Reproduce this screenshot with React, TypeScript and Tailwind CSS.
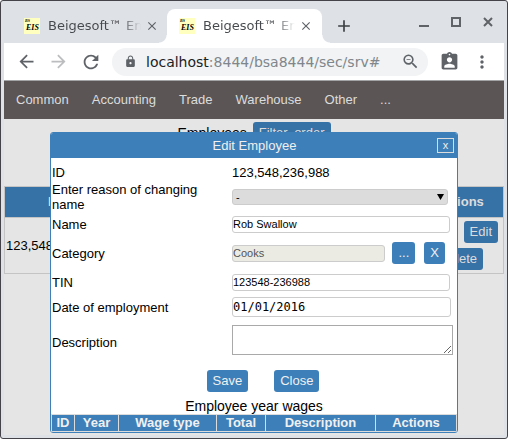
import type { ReactNode } from "react";
import {
  MdAdd,
  MdArrowBack,
  MdArrowForward,
  MdAssignmentInd,
  MdClose,
  MdLock,
  MdMoreVert,
  MdRefresh,
  MdZoomOut,
} from "react-icons/md";

const flare = "size-2 shrink-0 self-end";

function Favicon() {
  return (
    <svg className="size-4 shrink-0" viewBox="0 0 16 16" aria-hidden="true">
      <rect width="16" height="16" fill="#ffffc0" />
      <text x="1" y="4" fontSize="4" fontWeight="bold" fontStyle="italic" fontFamily="Liberation Serif, serif">BS</text>
      <text x="2" y="12" fontSize="8" fontWeight="bold" fontStyle="italic" fontFamily="Liberation Serif, serif">EIS</text>
    </svg>
  );
}

function BrowserTab({ active = false }: { active?: boolean }) {
  return (
    <div
      className={`flex h-[34px] w-[155px] items-center rounded-t-lg ${
        active ? "bg-white pl-3 pr-[9px]" : "pl-5"
      }`}
    >
      <Favicon />
      <span className="ml-2 mr-1 min-w-0 flex-1 overflow-hidden whitespace-nowrap bg-[linear-gradient(to_right,#45484c_78%,transparent)] bg-clip-text font-['DejaVu_Sans',sans-serif] text-[13px] leading-5 text-transparent">
        Beigesoft™ Enterprise
      </span>
      <button aria-label="Close tab" className="text-[#5f6368]">
        <MdClose size={14} />
      </button>
    </div>
  );
}

function ActionButton({ children, dim = false, type = "button" }: { children: ReactNode; dim?: boolean; type?: "button" | "submit" }) {
  return (
    <button
      type={type}
      className={`h-[22px] shrink-0 rounded-[3px] px-[6px] leading-[22px] ${
        dim ? "bg-[#3772a7] text-[#dcdcdc]" : "bg-[#3d7fb9] text-[#f0f0f0]"
      }`}
    >
      {children}
    </button>
  );
}

function Row({ label, htmlFor, height, children }: { label: string; htmlFor: string; height: string; children: ReactNode }) {
  return (
    <div className={`grid grid-cols-[181px_1fr] items-center ${height}`}>
      <label htmlFor={htmlFor} className="pl-px pr-6 leading-[15px]">
        {label}
      </label>
      <div className="flex items-center">{children}</div>
    </div>
  );
}

const field = "h-[17px] min-w-0 rounded-[3px] border border-[#ccc] text-[11px]";

function EditDialog() {
  return (
    <form
      role="dialog"
      aria-label="Edit Employee"
      className="absolute inset-x-[46px] top-[13px] overflow-hidden rounded-[3px] border border-[#3d7fb9] bg-white"
    >
      <div className="grid h-[25px] grid-cols-[1fr_auto_1fr] items-center bg-[#3d7fb9] pl-1 pr-[3px] text-[#f0f0f0]">
        <h2 className="col-start-2">Edit Employee</h2>
        <button type="button" aria-label="Close dialog" className="h-[15px] w-[17px] justify-self-end border border-[#dcdcdc] text-[11px] leading-[13px]">
          x
        </button>
      </div>

      <div className="pt-[5px]">
        <Row label="ID" htmlFor="id" height="h-[18px]">
          <output id="id">123,548,236,988</output>
        </Row>
        <Row label="Enter reason of changing name" htmlFor="reason" height="h-[31px]">
          <div className="relative mr-[9px] flex-1">
            <select id="reason" className="block h-4 w-full appearance-none rounded-[3px] border border-[#ccc] bg-[#dcdcdc] pl-[3px] text-[11px] leading-[14px]">
              <option>-</option>
            </select>
            <svg className="pointer-events-none absolute right-1 top-[5px] h-[6px] w-[7px]" viewBox="0 0 7 6" aria-hidden="true">
              <path d="M0 0h7L3.5 6z" />
            </svg>
          </div>
        </Row>
        <Row label="Name" htmlFor="name" height="h-6">
          <input id="name" defaultValue="Rob Swallow" className={`${field} mr-[7px] flex-1`} />
        </Row>
        <Row label="Category" htmlFor="category" height="h-[34px]">
          <input id="category" disabled defaultValue="Cooks" className={`${field} mr-[7px] flex-1 bg-[#ebebe4] text-[#545454]`} />
          <ActionButton>...</ActionButton>
          <div className="ml-[9px] mr-3 flex">
            <ActionButton>X</ActionButton>
          </div>
        </Row>
        <Row label="TIN" htmlFor="tin" height="h-6">
          <input id="tin" defaultValue="123548-236988" className={`${field} mr-[7px] flex-1`} />
        </Row>
        <Row label="Date of employment" htmlFor="date" height="h-[26px]">
          <input
            id="date"
            defaultValue="01/01/2016"
            className="mr-[6px] h-5 min-w-0 flex-1 rounded-[3px] border border-[#ccc] font-['DejaVu_Sans_Mono',monospace] text-[12px]"
          />
        </Row>
        <Row label="Description" htmlFor="description" height="h-11">
          <textarea id="description" className="mb-1 mr-1 h-[30px] min-w-0 flex-1 resize border border-[#a9a9a9] text-[11px]" />
        </Row>
      </div>

      <div className="flex justify-center gap-[26px] pl-[18px] pt-[6px]">
        <ActionButton type="submit">Save</ActionButton>
        <ActionButton>Close</ActionButton>
      </div>

      <table className="mt-[6px] w-full table-fixed border-collapse">
        <caption className="text-[14px] leading-4">Employee year wages</caption>
        <colgroup>
          <col className="w-[23px]" />
          <col className="w-11" />
          <col className="w-[98px]" />
          <col className="w-[49px]" />
          <col className="w-[110px]" />
          <col />
        </colgroup>
        <thead>
          <tr>
            {["ID", "Year", "Wage type", "Total", "Description", "Actions"].map((h) => (
              <th key={h} className="h-4 border border-[#dcdcdc] bg-[#3d7fb9] p-0 leading-4 text-[#f0f0f0]">
                {h}
              </th>
            ))}
          </tr>
        </thead>
      </table>
    </form>
  );
}

function EmployeesPage() {
  return (
    <main className="relative min-h-[316px] flex-1 bg-[#e5e5e5]">
      <div className="flex h-[67px] items-start justify-center gap-[6px] pt-[3px]">
        <h1 className="text-[14px] leading-[22px]">Employees</h1>
        <ActionButton dim>Filter, order</ActionButton>
      </div>
      <table className="w-full table-fixed border-collapse">
        <thead>
          <tr className="h-[31px] bg-[#3772a7] text-[#dcdcdc]">
            <th className="w-[100px] border border-[#c4c4c4] p-0">ID</th>
            <th className="border border-[#c4c4c4] p-0">Name</th>
            <th className="w-[87px] border border-[#c4c4c4] p-0">Actions</th>
          </tr>
        </thead>
        <tbody>
          <tr className="h-[55px]">
            <td className="border border-[#c4c4c4] py-0 pl-px">123,548,236,988</td>
            <td className="border border-[#c4c4c4] p-0 text-center">Rob Swallow</td>
            <td className="border border-[#c4c4c4] px-[5px] py-[3px]">
              <div className="flex flex-col gap-[5px]">
                <div className="flex justify-end">
                  <ActionButton dim>Edit</ActionButton>
                </div>
                <div className="flex justify-end pr-[15px]">
                  <ActionButton dim>Delete</ActionButton>
                </div>
              </div>
            </td>
          </tr>
        </tbody>
      </table>
      <EditDialog />
    </main>
  );
}

export default function App() {
  return (
    <div className="flex min-h-screen flex-col rounded-[3px] border border-[#45434a] bg-[#dee1e6] px-[3px] pb-[3px] font-['Liberation_Sans',Arial,sans-serif] text-[13px] text-black">
      <div className="flex h-[42px] items-end">
        <BrowserTab />
        <span className={`${flare} bg-[radial-gradient(circle_at_0_0,transparent_7px,white_8px)]`} />
        <BrowserTab active />
        <span className={`${flare} bg-[radial-gradient(circle_at_100%_0,transparent_7px,white_8px)]`} />
        <button aria-label="New tab" className="mb-[7px] ml-1 text-[#3c4043]">
          <MdAdd size={20} />
        </button>
        <div className="mb-4 ml-auto flex items-center gap-[22px] pr-[11px] text-[#5f6368]">
          <button aria-label="Minimize" className="flex h-[10px] w-[10px] items-end">
            <span className="h-[2px] w-[10px] bg-[#5f6368]" />
          </button>
          <button aria-label="Maximize" className="size-[10px] border-2 border-[#5f6368]" />
          <button aria-label="Close window">
            <svg className="block size-[10px]" viewBox="0 0 10 10" aria-hidden="true">
              <path d="M1 1l8 8M9 1l-8 8" stroke="currentColor" strokeWidth="2" />
            </svg>
          </button>
        </div>
      </div>

      <div className="flex h-[38px] items-center border-b border-[#a3a4a6] bg-white pl-3 pr-3 text-[#5f6368]">
        <button aria-label="Back"><MdArrowBack size={21} /></button>
        <button aria-label="Forward" className="ml-[11px] text-[#bbbdbf]"><MdArrowForward size={21} /></button>
        <button aria-label="Reload" className="ml-[11px]"><MdRefresh size={22} /></button>
        <div className="ml-[10px] flex h-7 min-w-0 flex-1 items-center rounded-full bg-[#f1f3f4] pl-3 pr-2">
          <MdLock size={13} className="shrink-0" />
          <div className="ml-[9px] min-w-0 flex-1 overflow-hidden whitespace-nowrap font-['DejaVu_Sans',sans-serif] text-[14px] leading-5">
            <span className="text-[#202124]">localhost</span>
            <span className="text-[#80868b]">:8444/bsa8444/sec/srv#</span>
          </div>
          <button aria-label="Zoom"><MdZoomOut size={19} /></button>
        </div>
        <button aria-label="Profile" className="ml-[11px]"><MdAssignmentInd size={21} /></button>
        <button aria-label="Menu" className="ml-3"><MdMoreVert size={20} /></button>
      </div>

      <nav className="flex h-[38px] items-center gap-[23px] bg-[#5b5655] pl-3 text-[#dcdcdc]">
        {["Common", "Accounting", "Trade", "Warehouse", "Other", "..."].map((item) => (
          <a key={item} href="#">{item}</a>
        ))}
      </nav>

      <EmployeesPage />
    </div>
  );
}
